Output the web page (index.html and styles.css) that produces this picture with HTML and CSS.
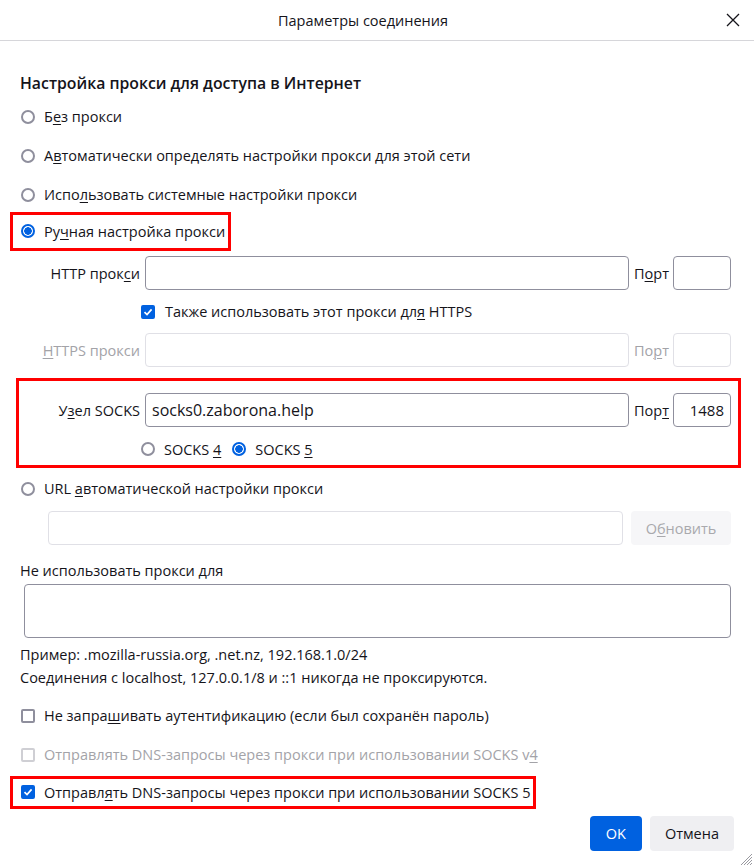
FILE: index.html
```html
<!DOCTYPE html>
<html lang="ru">
<head>
  <meta charset="UTF-8" />
  <title>Параметры соединения</title>
  <link rel="stylesheet" href="styles.css">
</head>
<body>
  <div class="dialog">
    <div class="titlebar">
      <span class="title">Параметры соединения</span>
      <span class="close">
        <svg width="14" height="14" viewBox="0 0 14 14"><path d="M1 1L13 13M13 1L1 13" stroke="#15141a" stroke-width="1.3" fill="none"/></svg>
      </span>
    </div>

    <div class="content">
      <h1>Настройка прокси для доступа в Интернет</h1>

      <div class="choice"><span class="radio"></span><span>Б<u>е</u>з прокси</span></div>
      <div class="choice"><span class="radio"></span><span>А<u>в</u>томатически определять настройки прокси для этой сети</span></div>
      <div class="choice"><span class="radio"></span><span>Испо<u>л</u>ьзовать системные настройки прокси</span></div>
      <div class="choice">
        <span class="hl hl-manual"><span class="radio checked"></span><span>Ру<u>ч</u>ная настройка прокси</span></span>
      </div>

      <div class="proxy-grid">
        <span class="field-label">HTTP прок<u>с</u>и</span>
        <span class="input"></span>
        <span class="port-label">П<u>о</u>рт</span>
        <span class="input"></span>

        <div class="https-check">
          <span class="checkbox checked">
            <svg width="10" height="10" viewBox="0 0 10 10"><path d="M1.5 5.2L4 7.6L8.6 2.4" stroke="#fff" stroke-width="1.7" fill="none"/></svg>
          </span>
          <span>Также использовать этот прокси дл<u>я</u> HTTPS</span>
        </div>

        <span class="field-label disabled"><u>H</u>TTPS прокси</span>
        <span class="input disabled"></span>
        <span class="port-label disabled">По<u>р</u>т</span>
        <span class="input disabled"></span>
      </div>

      <div class="hl hl-socks">
        <div class="proxy-grid">
          <span class="field-label">У<u>з</u>ел SOCKS</span>
          <span class="input big">socks0.zaborona.help</span>
          <span class="port-label">Пор<u>т</u></span>
          <span class="input port-value">1488</span>
          <div class="socks-version">
            <span class="radio"></span><span>SOCKS <u>4</u></span>
            <span class="radio checked"></span><span>SOCKS <u>5</u></span>
          </div>
        </div>
      </div>

      <div class="choice"><span class="radio"></span><span>URL <u>а</u>втоматической настройки прокси</span></div>
      <div class="url-row">
        <span class="input disabled url-input"></span>
        <span class="btn btn-disabled">О<u>б</u>новить</span>
      </div>

      <div class="plain-label">Не использовать прокси <u>д</u>ля</div>
      <div class="textarea"></div>
      <div class="note">Пример: .mozilla-russia.org, .net.nz, 192.168.1.0/24</div>
      <div class="note">Соединения с localhost, 127.0.0.1/8 и ::1 никогда не проксируются.</div>

      <div class="choice"><span class="checkbox"></span><span>Не запра<u>ш</u>ивать аутентификацию (если был сохранён пароль)</span></div>
      <div class="choice disabled"><span class="checkbox"></span><span>Отправлять DNS-запросы через прокси при использовании SOCKS v<u>4</u></span></div>
      <div class="choice">
        <span class="hl hl-dns">
          <span class="checkbox checked">
            <svg width="10" height="10" viewBox="0 0 10 10"><path d="M1.5 5.2L4 7.6L8.6 2.4" stroke="#fff" stroke-width="1.7" fill="none"/></svg>
          </span>
          <span>Отправл<u>я</u>ть DNS-запросы через прокси при использовании SOCKS 5</span>
        </span>
      </div>

      <div class="actions">
        <span class="btn btn-primary">OK</span>
        <span class="btn">Отмена</span>
      </div>
    </div>

    <svg class="grip" width="14" height="14" viewBox="0 0 14 14">
      <path d="M13 2L2 13M13 5L5 13M13 8L8 13M13 11L11 13" stroke="#9a9aa0" stroke-width="1" fill="none"/>
    </svg>
  </div>
</body>
</html>
```

FILE: styles.css
```css
body {
  margin: 0;
  background: #fff;
  font-family: 'Open Sans', 'Noto Sans', sans-serif;
  font-size: 14.5px;
  color: #15141a;
}

u {
  text-decoration-thickness: 1px;
  text-underline-offset: 2px;
}

.dialog {
  position: relative;
  width: 754px;
  height: 866px;
  overflow: hidden;
}

.titlebar {
  height: 40px;
  border-bottom: 1px solid #d6d6da;
  display: flex;
  align-items: center;
  justify-content: center;
  padding-right: 28px;
  position: relative;
}

.title {
  font-size: 14.5px;
}

.close {
  position: absolute;
  right: 14px;
  top: 13px;
  display: flex;
}

.content {
  padding: 31px 20px 0 20px;
}

h1 {
  margin: 0 0 3px 0;
  font-size: 15.8px;
  font-weight: 600;
  line-height: 22px;
}

.choice {
  height: 39px;
  display: flex;
  align-items: center;
  gap: 9px;
  padding-left: 1px;
}

.choice.disabled {
  color: #a3a3a8;
}

.radio {
  width: 14px;
  height: 14px;
  box-sizing: border-box;
  border: 2px solid #8f8f9d;
  border-radius: 50%;
  flex-shrink: 0;
  background: #fff;
}

.radio.checked {
  border-color: #0061e0;
  background: radial-gradient(circle, #0061e0 0 3.5px, #fff 4px);
}

.checkbox {
  width: 14px;
  height: 14px;
  box-sizing: border-box;
  border: 2px solid #8f8f9d;
  border-radius: 2px;
  flex-shrink: 0;
  display: flex;
  align-items: center;
  justify-content: center;
}

.choice.disabled .checkbox {
  border-color: #cfcfd4;
}

.checkbox.checked {
  background: #0061e0;
  border-color: #0061e0;
}

.hl {
  outline: 3px solid #ff0000;
}

.hl-manual {
  display: flex;
  align-items: center;
  gap: 9px;
  height: 33px;
  margin: -5px 0 0 -8px;
  padding: 0 3px 0 8px;
}

.hl-dns {
  display: flex;
  align-items: center;
  gap: 9px;
  height: 27px;
  margin: -3px 0 0 -8px;
  padding: 0 3px 0 8px;
}

.proxy-grid {
  display: grid;
  grid-template-columns: 125px 484px 44px 58px;
  align-items: center;
  margin-top: 3px;
}

.field-label {
  text-align: right;
  padding-right: 5px;
}

.port-label {
  padding-left: 5px;
}

.disabled {
  color: #a3a3a8;
}

.input {
  height: 34px;
  box-sizing: border-box;
  border: 1px solid #8f8f9d;
  border-radius: 4px;
  background: #fff;
  display: flex;
  align-items: center;
  padding: 0 6px;
}

.input.disabled {
  border-color: #e0e0e6;
}

.input.big {
  font-size: 16px;
}

.input.port-value {
  justify-content: flex-end;
  font-size: 15px;
}

.https-check {
  grid-column: 2 / 5;
  height: 43px;
  display: flex;
  align-items: center;
  gap: 10px;
  margin-left: -4px;
}

.hl-socks {
  margin: 14px -4px 0 -1px;
  padding: 9px 4px 2px 1px;
}

.socks-version {
  grid-column: 2 / 5;
  height: 28px;
  margin-top: 8px;
  margin-left: -4px;
  display: flex;
  align-items: center;
  gap: 9px;
}

.socks-version span:nth-child(3) {
  margin-left: 2px;
}

.hl-socks + .choice {
  margin-top: 4px;
}

.url-row {
  display: flex;
  align-items: center;
  gap: 8px;
  margin: 3px 0 0 28px;
  width: 683px;
}

.url-input {
  flex: 1;
}

.btn {
  height: 35px;
  box-sizing: border-box;
  border-radius: 4px;
  background: #efeff2;
  display: flex;
  align-items: center;
  justify-content: center;
  padding: 0 15px;
}

.btn-disabled {
  width: 100px;
  height: 34px;
  background: #f6f6f8;
  color: #a9a9ad;
}

.plain-label {
  margin-top: 16px;
  line-height: 20px;
}

.textarea {
  margin: 3px 0 0 4px;
  width: 707px;
  height: 54px;
  box-sizing: border-box;
  border: 1px solid #8f8f9d;
  border-radius: 4px;
}

.note {
  line-height: 23px;
}

.textarea + .note {
  margin-top: 5px;
}

.note + .choice {
  margin-top: 7px;
}

.actions {
  display: flex;
  justify-content: flex-end;
  gap: 8px;
  margin-top: 3px;
}

.btn-primary {
  background: #0061e0;
  color: #fff;
  width: 52px;
  padding: 0;
}

.grip {
  position: absolute;
  right: 1px;
  bottom: 0;
}
```
